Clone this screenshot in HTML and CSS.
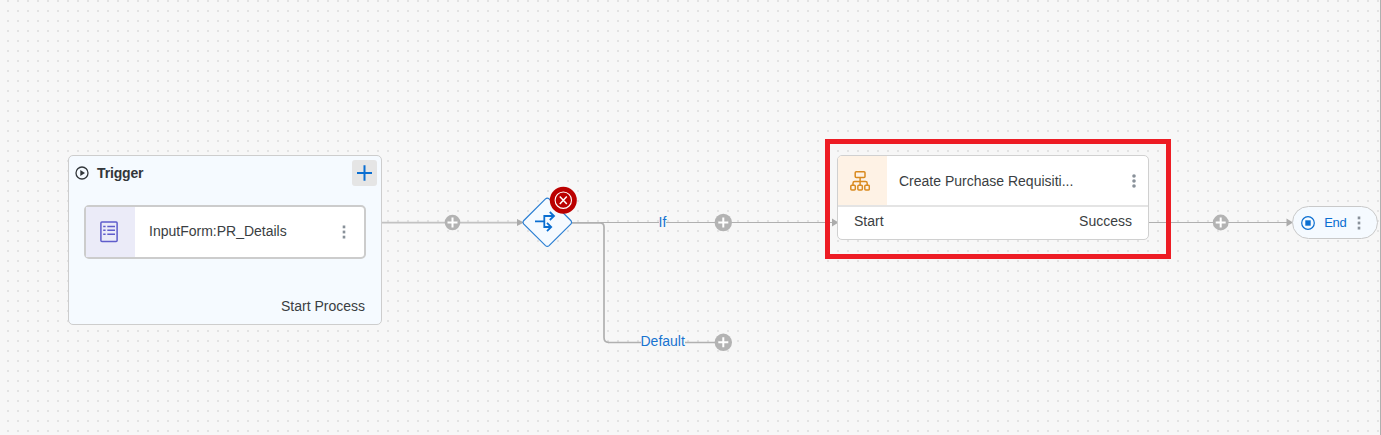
FILE: index.html
```html
<!DOCTYPE html>
<html lang="en">
<head>
<meta charset="utf-8">
<title>Process editor</title>
<link rel="stylesheet" href="styles.css">
</head>
<body>
<main class="canvas">
  <svg class="wires" width="1381" height="435" viewBox="0 0 1381 435">
    <g class="wire">
      <path class="wire-light" d="M382 222.7H518"/>
      <path d="M571 222.5H832M1149 222.5H1287"/>
      <path class="wire-branch" d="M571 222.8H600Q604 222.8 604 227V337.500Q604 342.300 608.500 342.300"/>
      <path class="wire-end" d="M608 342.500H716"/>
    </g>
    <g class="arrow">
      <path d="M517 219L524 222.500L517 226Z"/>
      <path d="M832 218.500L838.500 222.500L832 226.500Z"/>
      <path d="M1286.500 218.500L1293 222.500L1286.500 226.500Z"/>
    </g>
    <g class="add">
      <circle cx="452.500" cy="222.500" r="7.800"/>
      <circle cx="723.300" cy="222.500" r="8.700"/>
      <circle cx="723.300" cy="342.300" r="8.700"/>
      <circle cx="1220.700" cy="222.500" r="7.900"/>
      <path d="M447.500 222.500H457.500M452.500 217.500V227.500M718.300 222.500H728.300M723.300 217.500V227.500M718.300 342.300H728.300M723.300 337.300V347.300M1215.700 222.500H1225.700M1220.700 217.500V227.500"/>
    </g>
  </svg>

  <span class="branch-label branch-if">If</span>
  <span class="branch-label branch-default">Default</span>

  <section class="trigger">
    <header class="trigger-head">
      <svg width="14" height="14" viewBox="0 0 14 14"><circle cx="7" cy="7" r="6" fill="none" stroke="#32363a" stroke-width="1.300"/><path d="M5.300 3.900L10 7L5.300 10.100Z" fill="#32363a"/></svg>
      <h2 class="trigger-title">Trigger</h2>
      <span class="trigger-add"><svg width="25" height="26" viewBox="0 0 25 26"><path d="M5 13H20M12.500 5.300V20.700" stroke="#0a6ed1" stroke-width="2"/></svg></span>
    </header>
    <div class="form-card">
      <span class="form-icon"><svg width="18" height="22" viewBox="0 0 18 22" fill="none" stroke="#5f5dcb"><rect x=".9" y="1.100" width="16.200" height="19.400" rx="1" stroke-width="1.500"/><path d="M3.200 5.600H5.600M7.300 5.600H15M3.200 9.300H5.600M7.300 9.300H15M3.200 13.300H5.600M7.300 13.300H15" stroke-width="1.500"/></svg></span>
      <span class="form-name">InputForm:PR_Details</span>
      <svg class="form-more" width="4" height="14" viewBox="0 0 4 14" fill="#89919a"><rect x=".7" y=".5" width="2.600" height="2.800"/><rect x=".7" y="5.600" width="2.600" height="2.800"/><rect x=".7" y="10.700" width="2.600" height="2.800"/></svg>
    </div>
    <span class="trigger-foot">Start Process</span>
  </section>

  <svg class="gateway" width="60" height="66" viewBox="520 184 60 66">
    <path d="M545.500 198.900Q547.300 197.300 549.100 198.900L571 220.700Q572.300 222.300 571 223.900L549.100 245.600Q547.300 247.200 545.500 245.600L523.600 223.900Q522.300 222.300 523.600 220.700Z" fill="#f5faff" stroke="#2b7fd3" stroke-width="1.200"/>
    <path d="M535 221.300H544.300M554 216H544.300V227H551M549.800 212L554 216L549.800 220M547 222.800L551.200 227L547 231.200" fill="none" stroke="#0a6ed1" stroke-width="1.800"/>
    <circle cx="563.300" cy="200.200" r="13.500" fill="#b00"/>
    <circle cx="563.300" cy="200.200" r="8.200" fill="none" stroke="#fff" stroke-width="1.100"/>
    <path d="M559.800 196.500L566.800 203.900M566.800 196.500L559.800 203.900" stroke="#fff" stroke-width="1.500"/>
  </svg>

  <section class="task">
    <div class="task-head">
      <span class="task-icon"><svg width="20" height="20" viewBox="0 0 20 20" fill="none" stroke="#d98a1f" stroke-width="1.500"><rect x="5.200" y=".8" width="9.800" height="5.800" rx="1"/><path d="M10.100 6.700V14M3 14.200V12.300Q3 10.600 4.700 10.600H15.500Q17.200 10.600 17.200 12.300V14.200"/><rect x=".8" y="14.200" width="4.500" height="4.800" rx="1"/><rect x="7.850" y="14.200" width="4.500" height="4.800" rx="1"/><rect x="14.800" y="14.200" width="4.500" height="4.800" rx="1"/></svg></span>
      <span class="task-name">Create Purchase Requisiti...</span>
      <svg class="task-more" width="4" height="14" viewBox="0 0 4 14" fill="#89919a"><circle cx="2" cy="2" r="1.800"/><circle cx="2" cy="7" r="1.800"/><circle cx="2" cy="12" r="1.800"/></svg>
    </div>
    <div class="task-ports"><span>Start</span><span>Success</span></div>
  </section>
  <div class="highlight"></div>

  <div class="end">
    <svg width="14" height="14" viewBox="0 0 14 14"><circle cx="7" cy="7" r="6.300" fill="none" stroke="#0a6ed1" stroke-width="1.200"/><rect x="4.300" y="4.300" width="5.400" height="5.400" fill="#0a6ed1"/></svg>
    <span class="end-name">End</span>
    <svg class="end-more" width="4" height="14" viewBox="0 0 4 14" fill="#89919a"><rect x=".7" y=".5" width="2.600" height="2.800"/><rect x=".7" y="5.600" width="2.600" height="2.800"/><rect x=".7" y="10.700" width="2.600" height="2.800"/></svg>
  </div>
</main>
</body>
</html>
```
FILE: styles.css
```css
* { box-sizing: border-box; }
body { margin: 0; font: 14px/18px "Liberation Sans", Arial, sans-serif; color: #3a3e42; }
svg { display: block; flex: none; }
.canvas {
  position: relative;
  width: 1381px;
  height: 435px;
  overflow: hidden;
  border-right: 1px solid #b0b0b0;
  background-color: #f7f7f7;
  background-image: linear-gradient(#f7f7f7 8px, transparent 8px), linear-gradient(90deg, #f7f7f7 8px, #e3e3e3 8px);
  background-size: 10px 10px;
  background-position: 9px 2px;
}
.wires { position: absolute; left: 0; top: 0; }
.wire { fill: none; stroke: #b0b0b0; stroke-width: 1.2; }
.wire-light { stroke: #c2c2c2; stroke-width: 1.7; }
.wire-branch { stroke-width: 1.7; }
.wire-end { stroke-width: 1.5; }
.arrow { fill: #ababab; }
.add { fill: #b3b3b3; }
.add path { stroke: #fff; stroke-width: 2; }

.branch-label { position: absolute; line-height: 18px; background: #f7f7f7; color: #1873d0; }
.branch-if { left: 658.500px; top: 213px; }
.branch-default { left: 640.500px; top: 332px; }

.trigger {
  position: absolute;
  left: 68px;
  top: 155px;
  width: 314px;
  height: 170px;
  display: flex;
  flex-direction: column;
  border: 1px solid #cdcdcd;
  border-radius: 5px;
  background: #f5faff;
}
.trigger-head { display: flex; align-items: center; height: 34px; padding: 0 4px 0 6px; }
.trigger-title { margin: 0 auto 0 8px; font-size: 14px; line-height: 18px; font-weight: 700; letter-spacing: -.15px; color: #32363a; }
.trigger-add { border-radius: 3px; background: #e5e5e5; }
.form-card {
  display: flex;
  align-items: center;
  width: 282px;
  height: 54px;
  margin: 15px 0 0 15px;
  padding-right: 18px;
  border: 2px solid #ccc;
  border-radius: 5px;
  background: #fff;
}
.form-icon { display: flex; align-items: center; justify-content: center; align-self: stretch; width: 49px; padding: 0 3px 1px 0; background: #ebebf8; }
.form-name { margin: -2px auto 0 14px; }
.form-more { margin-top: 0; }
.trigger-foot { margin: 38px 16px 0 auto; }

.gateway { position: absolute; left: 520px; top: 184px; }

.task {
  position: absolute;
  left: 837px;
  top: 155px;
  width: 312px;
  height: 85px;
  overflow: hidden;
  border: 1px solid #d0d0d0;
  border-radius: 5px;
  background: #fff;
}
.task-head { display: flex; align-items: center; height: 51px; padding-right: 12px; border-bottom: 2px solid #e4e4e4; }
.task-icon { display: flex; align-items: center; justify-content: center; align-self: stretch; width: 49px; padding-right: 5px; background: #fef2e5; }
.task-name { margin: 0 auto 0 12px; }
.task-more { margin-top: 1px; }
.task-ports { display: flex; justify-content: space-between; padding: 5px 16px 0; }

.highlight { position: absolute; left: 825px; top: 139px; width: 346px; height: 120px; border: 5px solid #ed1c24; }

.end {
  position: absolute;
  left: 1292px;
  top: 206px;
  width: 86px;
  height: 33px;
  display: flex;
  align-items: center;
  padding-left: 8.300px;
  border: 1px solid #c9c9c9;
  border-radius: 17px;
  background: #f5faff;
}
.end-name { margin-left: 9px; font-size: 13px; letter-spacing: -.4px; color: #0a6ed1; }
.end-more { margin-left: 10.500px; }
```
